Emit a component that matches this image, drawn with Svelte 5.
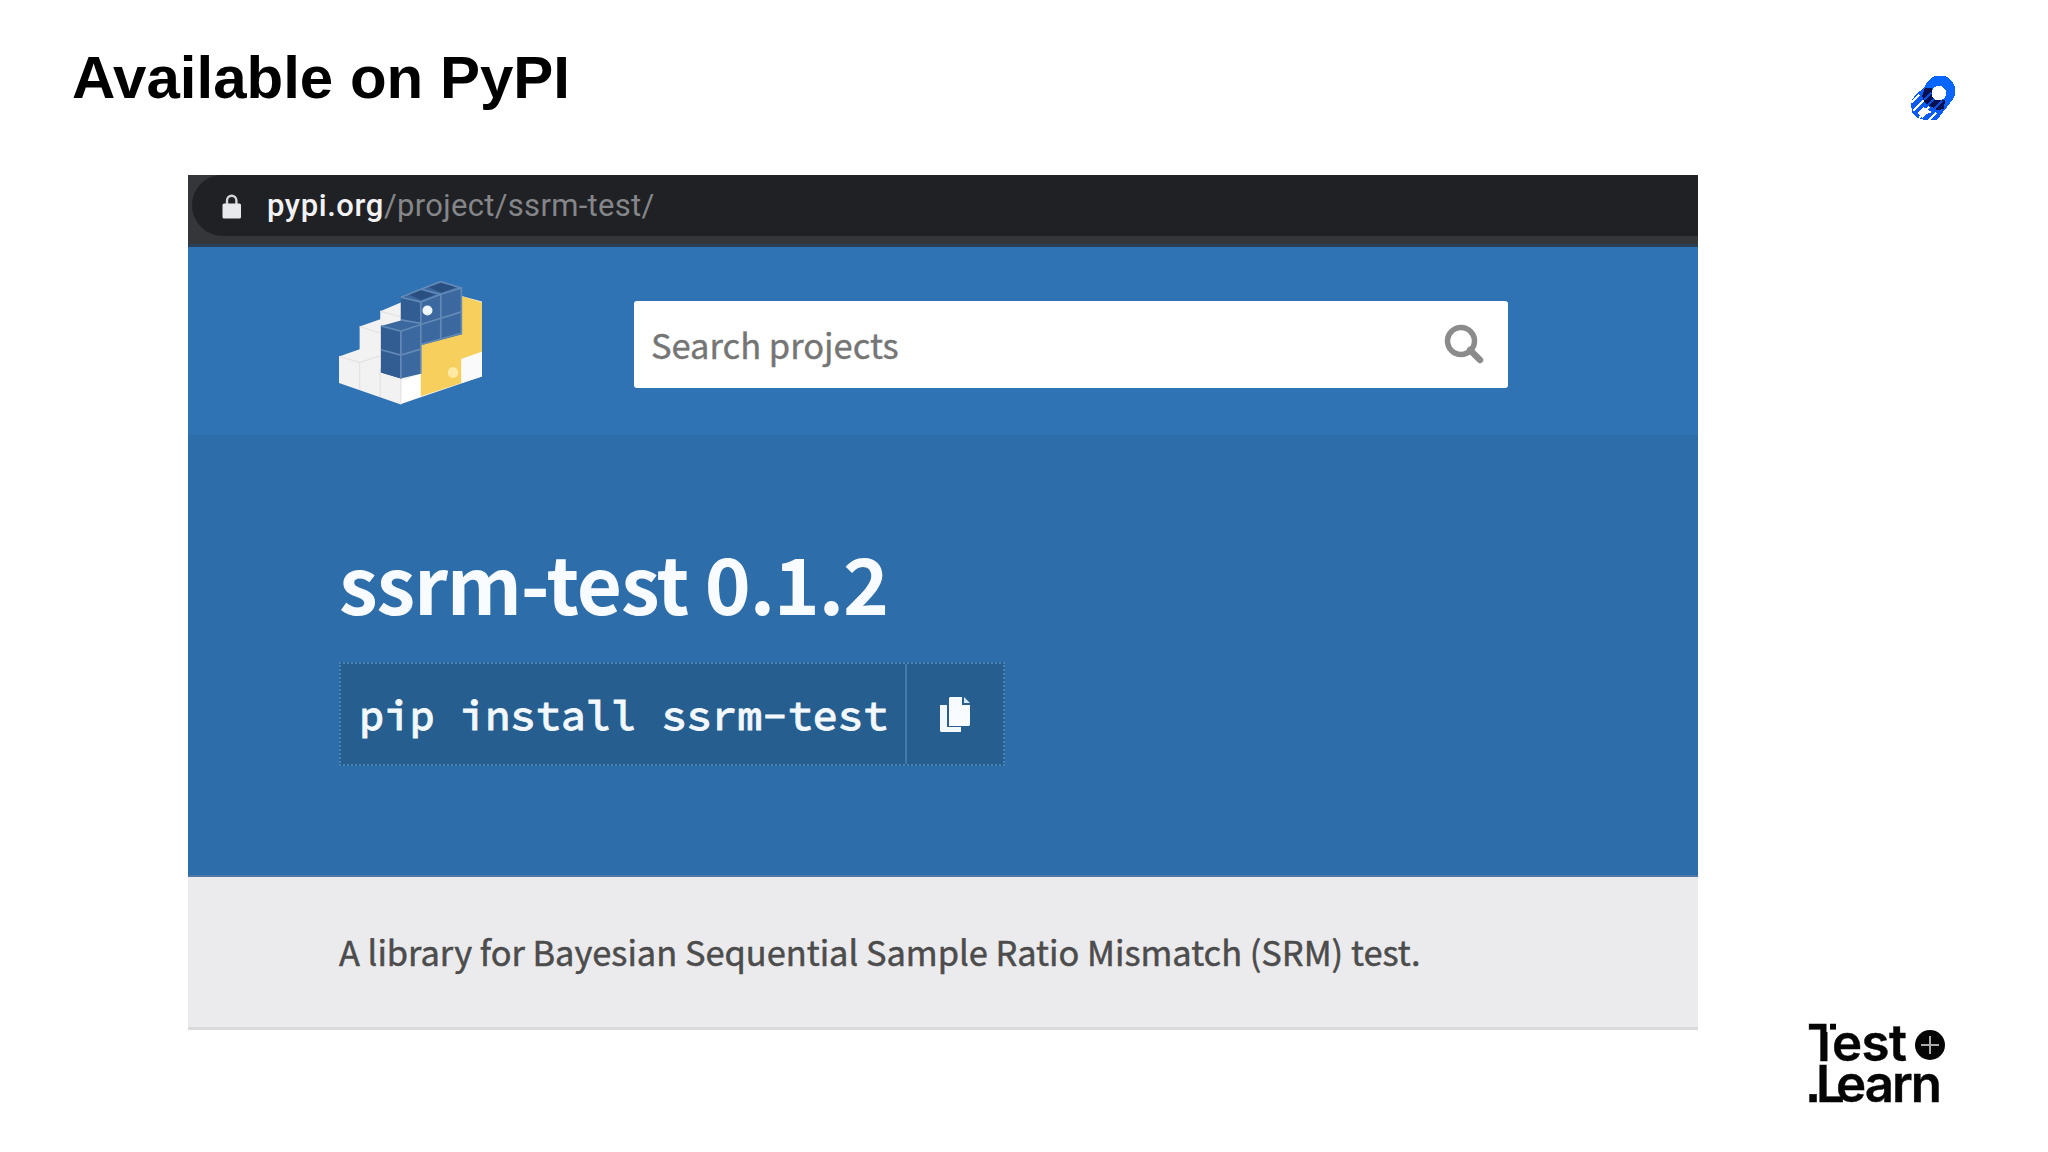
<script>
  const project = { name: 'ssrm-test', version: '0.1.2' };
  const summary = 'A library for Bayesian Sequential Sample Ratio Mismatch (SRM) test.';
</script>

<main class="slide">
  <header class="heading">
    <h1>Available on PyPI</h1>
    <svg class="comet" viewBox="0 0 48 48" shape-rendering="crispEdges" aria-hidden="true">
      <path d="M15 12L40 28L27 45L14 45L8 43L2 38L1 27L5 20Z" fill="#0b5cf5" />
      <path d="M1 28l8-8M3 36l11-11M9 43l6-6M14 37l5-5M18 46l8-8" stroke="#fff" stroke-width="1.800" />
      <path d="M8 38l5-6 9 5-6 2-4 4z" fill="#fff" />
      <circle cx="30" cy="16" r="15.500" fill="#0866ff" />
      <path d="M15 13L22 13L24 25L35 25L34 34L27 35L15 28L12 21Z" fill="#06104f" />
      <path d="M14 25l7-7M17 31l7-7M24 34l8-8" stroke="#0b50dd" stroke-width="2" />
      <circle cx="28.800" cy="18.200" r="7.300" fill="#fff" />
    </svg>
  </header>

  <div class="content">
    <section class="capture">
      <div class="browser">
        <div class="address">
          <svg class="lock" viewBox="0 0 20 25" aria-hidden="true">
            <path d="M5 11V6.500a4.700 4.700 0 0 1 9.400 0V11" fill="none" stroke="#d4d5d8" stroke-width="2.400" />
            <rect x="0.500" y="9.500" width="18.500" height="15" rx="1.500" fill="#e8e9ec" />
          </svg>
          <span class="url"><b>pypi.org</b><span>/project/ssrm-test/</span></span>
        </div>
      </div>

      <div class="nav">
        <svg class="pypi" viewBox="54 60 434 376" aria-hidden="true">
          <path d="M56 290L118 268V200L180 178V154L242 128L300 110L424 108L486 125V350L240 434L56 370Z" fill="#f3f2f2" />
          <path d="M242 365L302 342V410L240 434Z" fill="#fff" />
          <path d="M302 255L424 222V108L486 128V276L424 298V370L302 410Z" fill="#f7cf5c" />
          <path d="M424 298L486 276V350L424 370Z" fill="#fafafa" />
          <path d="M56 290L118 308L180 288M118 200L180 220M180 154L240 170M118 308V390M180 325V412M242 350V434" fill="none" stroke="#e6e3e3" stroke-width="4" />
          <path d="M182 198L242 182V110L302 86L362 64L424 84V224L302 256V342L242 356L182 338Z" fill="#3b689e" />
          <path d="M182 198L242 215V356L182 338ZM242 110L302 126V190L242 180Z" fill="#315d93" />
          <path d="M262 102L302 88L344 104L302 120ZM322 80L362 66L408 82L364 98Z" fill="#294f80" />
          <path d="M182 198L242 214L302 194V342M242 214V356M182 270L242 286L302 268M242 112L302 126V190L242 180M302 126L362 103L424 84V224M362 103V238M302 194L424 156M302 88L362 103M242 112L302 88L362 65L424 84M302 254L424 220" fill="none" stroke="#638ab7" stroke-width="5" />
          <circle cx="322" cy="152" r="15" fill="#eef7ff" />
          <circle cx="399" cy="338" r="16" fill="#ffe9a3" />
        </svg>
        <div class="search">
          <span>Search projects</span>
          <svg viewBox="0 0 40 40" aria-hidden="true">
            <circle cx="17" cy="17" r="13.500" fill="none" stroke="#8b8b8b" stroke-width="5.500" />
            <path d="M26 26L36 36" stroke="#8b8b8b" stroke-width="6.500" stroke-linecap="round" />
          </svg>
        </div>
      </div>

      <div class="hero">
        <h2>{project.name} {project.version}</h2>
        <div class="install">
          <code>pip install {project.name}</code>
          <button aria-label="Copy install command">
            <svg viewBox="0 0 32 38" aria-hidden="true">
              <path d="M1 9H8V31H22V36H2L1 35Z" fill="#f2f8fd" />
              <path d="M10 2L11 1H23V9H31V29L30 30H10Z" fill="#f8fbff" />
              <path d="M25 1L31 7H25Z" fill="#d5e6f5" />
            </svg>
          </button>
        </div>
      </div>

      <p class="summary"><span>{summary}</span></p>
    </section>

    <svg class="brand" viewBox="-6 -10 156 104" aria-label="Test and Learn">
      <g class="letters">
        <text x="-2" y="40">T<tspan x="23" textLength="75">est</tspan></text>
        <text x="-3" y="81"><tspan class="point">.</tspan><tspan x="7">L</tspan><tspan x="27" textLength="106">earn</tspan></text>
      </g>
      <rect x="17.500" y="1" width="3.500" height="10" fill="#fff" />
      <rect x="27" y="1" width="5" height="9.500" fill="#fff" />
      <circle cx="121" cy="24" r="15" fill="#050505" />
      <path d="M112 24h18M121 15v18" stroke="#aaa" stroke-width="2" />
    </svg>
  </div>
</main>

<style>
  :global(body) { margin: 0; background: #fff; }
  * { box-sizing: border-box; }
  .slide {
    width: 2048px;
    height: 1152px;
    overflow: hidden;
    background: #fff;
    font-family: "Noto Sans CJK SC", "Noto Sans", sans-serif;
  }
  .heading {
    display: flex;
    justify-content: space-between;
    align-items: flex-start;
    height: 175px;
    padding: 44px 90px 0 72px;
  }
  h1 {
    margin: 0;
    font: bold 60px/68px "Liberation Sans", sans-serif;
    color: #000;
    white-space: nowrap;
  }
  .comet { width: 48px; height: 48px; margin-top: 31px; }
  .content { display: flex; align-items: flex-start; padding-left: 188px; }
  .capture { width: 1510px; flex: none; }
  .browser {
    height: 72px;
    background: #35363a;
    border-bottom: 3px solid #293f55;
  }
  .address {
    display: flex;
    align-items: center;
    height: 61px;
    margin-left: 4px;
    padding-left: 30px;
    border-radius: 30px 0 0 31px;
    background: #202124;
  }
  .lock { width: 20px; height: 25px; margin-top: 2px; }
  .url {
    margin-left: 25px;
    font: 31px/36px Roboto, sans-serif;
    letter-spacing: 0.3px;
    color: #85868a;
    white-space: nowrap;
  }
  .url b { font-weight: 500; letter-spacing: 0.6px; color: #f2f2f4; }
  .nav {
    display: flex;
    height: 188px;
    padding: 33px 0 0 150px;
    background: #2f73b4;
  }
  .pypi { width: 145px; height: 125px; flex: none; }
  .search {
    display: flex;
    justify-content: space-between;
    align-items: center;
    width: 874px;
    height: 87px;
    margin: 21px 0 0 151px;
    padding: 0 24px 0 17px;
    border-radius: 3px;
    background: #fff;
    font-size: 34.5px;
    line-height: 48px;
    color: #757575;
    -webkit-text-stroke: 0.4px #757575;
    white-space: nowrap;
  }
  .search span { margin-top: -2px; }
  .search svg { width: 40px; height: 40px; margin-top: -2px; }
  .hero {
    height: 442px;
    padding: 98px 0 0 151px;
    background: #2d6da9;
    border-bottom: 2px solid #4d78a5;
  }
  h2 {
    margin: 0;
    font-size: 78px;
    font-weight: 700;
    letter-spacing: -1.15px;
    line-height: 96px;
    color: #f8fbff;
    white-space: nowrap;
  }
  .install {
    display: flex;
    width: 666px;
    height: 104px;
    margin-top: 33px;
    border: 2px dotted #4783b7;
    background: #265e90;
  }
  code {
    flex: 1;
    padding-left: 18px;
    font: 500 42px/102px "Source Code Pro", "Noto Sans Mono CJK SC", "DejaVu Sans Mono", monospace;
    color: #f2f8fd;
    -webkit-text-stroke: 0.8px #f2f8fd;
    white-space: nowrap;
  }
  button {
    display: flex;
    align-items: center;
    justify-content: center;
    width: 98px;
    padding: 2px 0 0;
    border: 0;
    border-left: 2px solid #4079aa;
    background: none;
  }
  button svg { width: 32px; height: 38px; }
  .summary {
    display: flex;
    align-items: center;
    height: 153px;
    margin: 0;
    padding: 0 0 2px 151px;
    border-bottom: 3px solid #dadadd;
    background: #ebebed;
    font-size: 34.4px;
    line-height: 48px;
    color: #4c4c4c;
    -webkit-text-stroke: 0.5px #4c4c4c;
    white-space: nowrap;
  }
  .brand { width: 156px; height: 104px; margin: 836px 0 0 105px; flex: none; }
  .letters { font: 600 51px Inter, sans-serif; fill: #050505; stroke: #050505; stroke-width: 0.4px; }
  .point { font-family: "Liberation Sans", sans-serif; font-weight: 700; }
</style>
